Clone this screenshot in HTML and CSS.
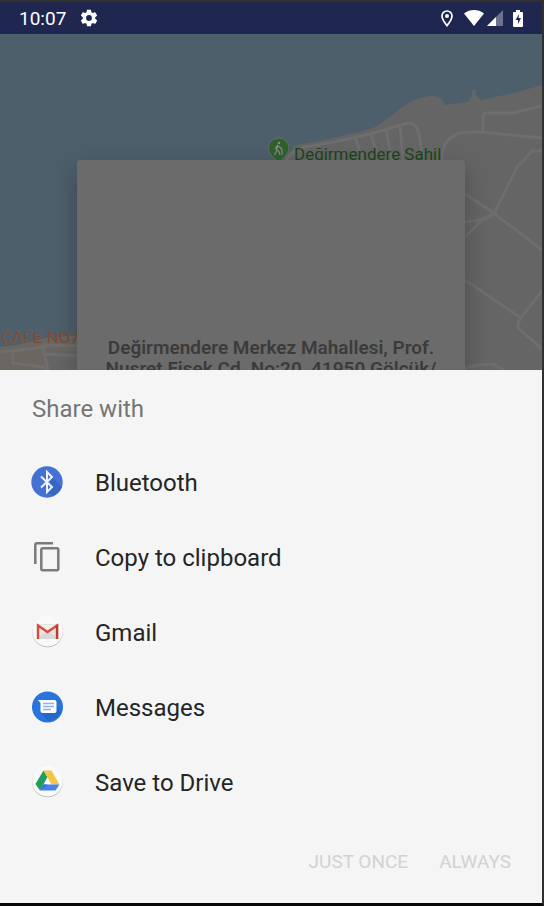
FILE: index.html
```html
<!DOCTYPE html>
<html lang="en">
<head>
<meta charset="utf-8">
<meta name="viewport" content="width=device-width, initial-scale=1">
<title>Share with</title>
<link rel="stylesheet" href="styles.css">
</head>
<body>
<header class="status">
  <time class="clock">10:07</time>
  <svg class="gear" viewBox="0 0 24 24" aria-hidden="true"><path d="M19.4 13c0-.3.1-.6.1-1s0-.7-.1-1l2.100-1.650c.2-.15.250-.42.120-.64l-2-3.460c-.12-.22-.39-.3-.61-.22l-2.490 1c-.52-.4-1.080-.73-1.690-.98l-.38-2.650A.49.49 0 0 0 14 2h-4c-.25 0-.46.180-.49.420l-.38 2.650c-.61.250-1.170.590-1.690.980l-2.490-1c-.23-.09-.49 0-.61.220l-2 3.460c-.13.220-.07.490.120.640L4.570 11c-.04.3-.07.7-.07 1s.03.7.07 1l-2.110 1.650c-.19.150-.24.420-.12.640l2 3.460c.12.220.39.3.61.220l2.490-1c.52.4 1.080.730 1.690.980l.38 2.650c.03.240.24.420.49.420h4c.25 0 .46-.18.49-.42l.38-2.650c.61-.25 1.170-.59 1.690-.98l2.490 1c.23.090.49 0 .61-.22l2-3.460c.12-.22.070-.49-.12-.64zM12 15.500A3.500 3.500 0 1 1 12 8.500a3.500 3.500 0 0 1 0 7z"/></svg>
  <div class="indicators">
    <svg class="pin" viewBox="0 0 12 17" aria-hidden="true"><path d="M6 1a5 5 0 0 0-5 5c0 3.600 5 9.600 5 9.600S11 9.600 11 6a5 5 0 0 0-5-5z" fill="none" stroke="#fff" stroke-width="1.700"/><circle cx="6" cy="6" r="2"/></svg>
    <svg class="wifi" viewBox="0 0 20 16" aria-hidden="true"><path d="M0 3.500C6-1.100 14-1.100 20 3.500L10 16z"/></svg>
    <svg class="signal" viewBox="0 0 16 16" aria-hidden="true"><path d="M16 0v16H0z" opacity=".35"/><path d="M9 7v9H0z"/></svg>
    <svg class="battery" viewBox="0 0 10 17" aria-hidden="true"><path d="M3 0h4v2h2q1 0 1 1v13q0 1-1 1H1q-1 0-1-1V3q0-1 1-1h2z"/><path d="M6 4L2.500 10H5v4l3-6H5.500z" fill="#1f264f"/></svg>
  </div>
</header>

<main class="map">
  <svg class="map-art" viewBox="0 34 542 336" preserveAspectRatio="xMidYMin slice" aria-hidden="true">
    <rect y="34" width="542" height="336" fill="#4d5f6b"/>
    <path fill="#656565" d="M542 85L514 93 481 100 476 96V90H472V96L468 102 444 105 443 101Q440 96 430 96 420 97 415 100C408 103 401 107 395 113L378 126Q365 131 350 134L320 141 300 144Q293 145 293 148L285 157 250 200 180 290 78 338V370H542z"/>
    <path fill="#6b6760" d="M0 347L16 345 30 342 45 338 80 335V370H0z"/>
    <path fill="#656565" d="M45 350L80 352V370H48z"/>
    <g fill="none" stroke="#6e6e6e" stroke-width="3" stroke-linejoin="round">
      <path d="M286 160Q294 149 304 147L335 142 370 134 408 123Q417 123 419 134L423 160M356 139L362 160M371 134L379 160M386 130L392 160M400 126L403 160"/>
      <path d="M442 160Q441 139 460 133 475 131 490 133L542 138M483 132V117Q483 113 487 113H512L542 106M542 151H532L517 167 494 214"/>
      <path d="M465 194L491 211 542 250M465 222L480 220 494 214 480 222 465 237M465 280L521 318 542 291M521 318L518 323V328L542 349M465 368L478 365 493 364 504 370"/>
      <path d="M0 352L30 349 50 345 80 346M13 350V363L45 367M43 348L48 370M45 354L80 356"/>
    </g>
    <path fill="#2f602e" stroke="#607062" d="M278.500 138A10 10 0 0 0 268.500 148C268.500 154 275 159 278.500 163 282 159 289 154 289 148A10 10 0 0 0 278.500 138z"/>
    <g fill="none" stroke="#858b83" stroke-width="1.200"><path d="M278 145L276.500 149.500 279 151.500 280 155M277 150L274.500 155M277.500 145L275 149M278.500 146L281.500 149M282 148.500V155"/><circle cx="279" cy="143" r=".7"/></g>
    <text class="place park" x="294" y="160">Değirmendere Sahil</text>
    <text class="place cafe" x="1" y="343">CAFE NO7</text>
  </svg>
  <article class="card">
    <p class="address">Değirmendere Merkez Mahallesi, Prof. Nusret Fişek Cd. No:20, 41950 Gölcük/</p>
  </article>
</main>

<section class="sheet" aria-labelledby="share-title">
  <h1 class="title" id="share-title">Share with</h1>
  <ul class="targets">
    <li><button class="target" type="button">
      <svg class="icon" viewBox="0 0 32 32" aria-hidden="true"><circle cx="16" cy="16" r="15.700" fill="#4472d4"/><path d="M21 11l10 10a16 16 0 0 1-10 9l-5-4z" fill="#3966c2"/><path d="M10 10.500L21 21l-5 5V6l5 5-11 10.500" fill="none" stroke="#eef2fb" stroke-width="2"/></svg>
      <span>Bluetooth</span></button></li>
    <li><button class="target" type="button">
      <svg class="icon" viewBox="0 0 32 32" fill="none" stroke="#7b7b7b" stroke-width="2.500" aria-hidden="true"><path d="M4.300 23V4q0-1.700 1.700-1.700h16"/><rect x="10.300" y="7.300" width="17" height="22" rx="1.500"/></svg>
      <span>Copy to clipboard</span></button></li>
    <li><button class="target" type="button">
      <svg class="icon" viewBox="0 0 32 32" aria-hidden="true"><circle cx="16.500" cy="16" r="15.300" fill="#b0b0b0"/><circle cx="16.500" cy="15.200" r="15.300" fill="#f9f9f9"/><path d="M6 8h21v15H6z" fill="#e5e5e5"/><path d="M6 23l10.500-9L27 23z" fill="#d9d9d9"/><path d="M7 9l9.500 7L26 9z" fill="#efefef"/><path d="M7 23V9.500l9.500 6.500L26 9.500V23" fill="none" stroke="#d54c3f" stroke-width="2.400"/><path d="M25 10l2.200-2v15H25z" fill="#b93d35"/></svg>
      <span>Gmail</span></button></li>
    <li><button class="target" type="button">
      <svg class="icon" viewBox="0 0 32 32" aria-hidden="true"><circle cx="16.500" cy="16" r="15.500" fill="#2874df"/><path d="M9 21l8 9q9-1 13-9l-6-8z" fill="#2367c8"/><path d="M7 9h16.500q2 0 2 2v9q0 2-2 2H11.500q-2 0-2-2v-8z" fill="#fff"/><path d="M12 12.500h11M12 15.500h11M12 18.500h8" stroke="#87aef0" stroke-width="1.500"/></svg>
      <span>Messages</span></button></li>
    <li><button class="target" type="button">
      <svg class="icon" viewBox="0 0 32 32" aria-hidden="true"><circle cx="16.500" cy="16" r="15.300" fill="#b0b0b0"/><circle cx="16.500" cy="15.200" r="15.300" fill="#fafafa"/><path d="M12.500 4.500L16.500 11 9 24.500 4.500 18z" fill="#219d5c"/><path d="M12.500 4.500h8l8 14h-8z" fill="#f5c746"/><path d="M12.500 18.500h16l-4 6H9z" fill="#4682ef"/><path d="M12.500 18.500h4L9 24.500z" fill="#386ad3"/></svg>
      <span>Save to Drive</span></button></li>
  </ul>
  <div class="actions">
    <button class="action" type="button" disabled>JUST ONCE</button>
    <button class="action" type="button" disabled>ALWAYS</button>
  </div>
</section>
</body>
</html>
```
FILE: styles.css
```css
* {
  box-sizing: border-box;
}

body {
  display: flex;
  flex-direction: column;
  min-height: 100vh;
  margin: 0;
  border: solid #303030;
  border-width: 2px 2px 3px 0;
  border-bottom-color: #080808;
  background: #f5f5f5;
  font-family: Roboto, "Liberation Sans", sans-serif;
}

button {
  border: 0;
  background: none;
  font: inherit;
}

.status {
  display: flex;
  align-items: center;
  height: 32px;
  padding: 0 19px;
  background: #1f264f;
  color: #fff;
}

.status svg {
  fill: #fff;
}

.clock {
  font-size: 19px;
}

.gear {
  width: 20px;
  height: 20px;
  margin-left: 13px;
}

.indicators {
  display: flex;
  align-items: center;
  margin-left: auto;
}

.pin {
  width: 12px;
  height: 17px;
  margin-right: 11px;
}

.wifi {
  width: 20px;
  height: 16px;
  margin-right: 3px;
}

.signal {
  width: 16px;
  height: 16px;
  margin-right: 10px;
}

.battery {
  width: 10px;
  height: 17px;
}

.map {
  position: relative;
  flex: 1 1 0;
  min-height: 336px;
  overflow: hidden;
  background: #4d5f6b;
}

.map-art {
  position: absolute;
  inset: 0;
  width: 100%;
  height: 100%;
}

.place {
  font-size: 17px;
  paint-order: stroke;
  stroke-width: 1px;
}

.park {
  fill: #1d451c;
  stroke: #666b65;
}

.cafe {
  fill: #804a32;
  stroke: #5e686d;
}

.card {
  position: relative;
  height: 400px;
  margin: 126px 77px 0;
  padding: 177px 24px 0;
  border-radius: 3px;
  background: #6b6b6b;
  box-shadow: 0 8px 24px rgba(0, 0, 0, 0.25);
}

.address {
  margin: 0;
  color: #3b3b3b;
  font-size: 19px;
  font-weight: 600;
  line-height: 21px;
  text-align: center;
}

.sheet {
  background: #f5f5f5;
}

.title {
  margin: 0;
  padding: 4px 32px 0;
  color: #757575;
  font-size: 24px;
  font-weight: 400;
  line-height: 71px;
}

.targets {
  margin: 0;
  padding: 0;
  list-style: none;
}

.target {
  display: flex;
  align-items: center;
  gap: 32px;
  width: 100%;
  height: 75px;
  padding: 0 31px;
  color: #252525;
  font-size: 24px;
  text-align: left;
}

.icon {
  flex: none;
  width: 32px;
  height: 32px;
  margin-bottom: 2px;
}

.actions {
  display: flex;
  justify-content: flex-end;
  gap: 31px;
  height: 83px;
  padding: 0 31px;
}

.action {
  padding: 0;
  color: #d2d2d2;
  font-size: 19px;
}
```
